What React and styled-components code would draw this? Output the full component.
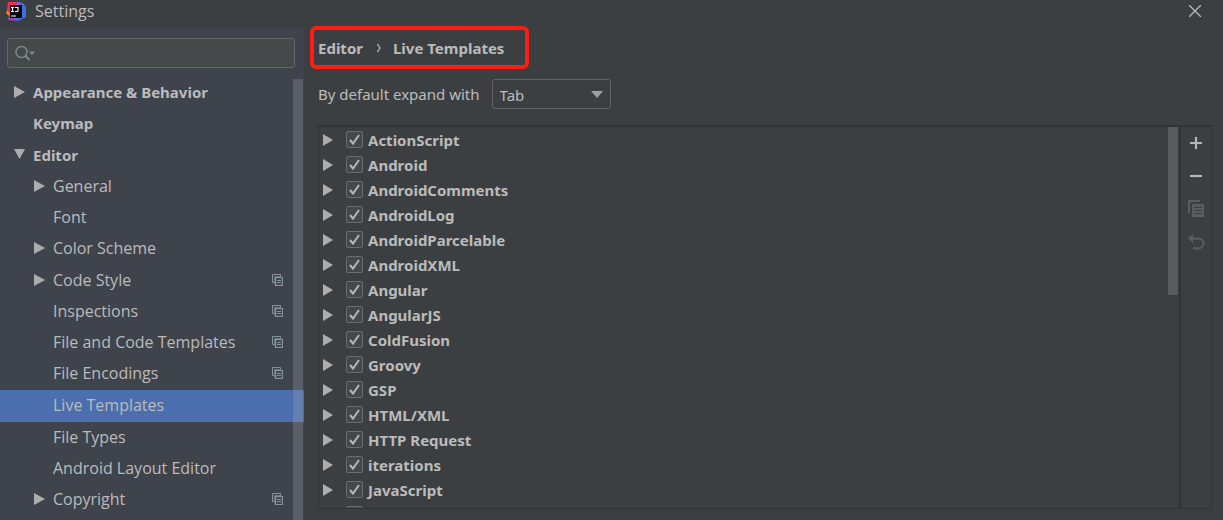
import React, { useState } from "react";
import styled, { createGlobalStyle, css } from "styled-components";

const GlobalStyle = createGlobalStyle`
  * { box-sizing: border-box; }
  body {
    margin: 0;
    background: #3c3f41;
    color: #bbbbbb;
    font: 15px/20px "Noto Sans", "Segoe UI", sans-serif;
  }
  button, input, select { font: inherit; color: inherit; }
`;

const Window = styled.div`
  display: flex;
  flex-direction: column;
  height: 100vh;
  overflow: hidden;
`;

const TitleBar = styled.header`
  flex: none;
  display: flex;
  align-items: center;
  gap: 9px;
  height: 28px;
  padding: 0 22px 6px 6px;
`;

const Title = styled.h1`
  flex: 1;
  margin: 0;
  font: 400 16px/20px "Open Sans", "Segoe UI", sans-serif;
`;

const IconButton = styled.button`
  display: grid;
  place-items: center;
  padding: 0;
  border: 0;
  background: none;
`;

const Body = styled.div`
  flex: 1;
  display: flex;
  min-height: 0;
`;

const Sidebar = styled.aside`
  flex: none;
  display: flex;
  flex-direction: column;
  width: 304px;
  background: #3f434c;
`;

const SearchBox = styled.label`
  flex: none;
  display: flex;
  align-items: center;
  height: 30px;
  margin: 10px 9px 0 7px;
  padding-left: 7px;
  border: 1px solid #646464;
  border-radius: 3px;
  background: #45494a;
`;

const SearchInput = styled.input`
  flex: 1;
  min-width: 0;
  border: 0;
  outline: 0;
  background: none;
`;

const TreeArea = styled.div`
  flex: 1;
  display: grid;
  grid-template: minmax(0, 1fr) / minmax(0, 1fr);
  min-height: 0;
  margin-top: 9px;
  overflow: hidden;
`;

const Tree = styled.ul`
  grid-area: 1 / 1;
  margin: 0;
  padding: 0;
  list-style: none;
`;

const TreeScrollbar = styled.div`
  grid-area: 1 / 1;
  justify-self: end;
  width: 10px;
  margin: 2px 1px 0 0;
  background: rgba(166, 170, 175, 0.28);
  pointer-events: none;
`;

const TreeRow = styled.li`
  display: flex;
  align-items: center;
  gap: 8px;
  height: 31px;
  padding: 0 21px 2px ${(p) => 14 + p.$level * 20}px;
  font: ${(p) => (p.$level === 0
    ? '700 15px/20px "Noto Sans"'
    : '400 16px/20px "Open Sans"')}, "Segoe UI", sans-serif;
  &:nth-child(4n + 2) { height: 32px; }
  ${(p) => p.$selected && css`
    height: 32px;
    background: #4b6eaf;
  `}
`;

const ArrowSlot = styled.span`
  flex: none;
  display: grid;
  width: 11px;
`;

const TreeLink = styled.a`
  flex: 1;
  color: inherit;
  text-decoration: none;
  white-space: nowrap;
`;

const Main = styled.main`
  flex: 1;
  display: flex;
  flex-direction: column;
  align-items: stretch;
  min-width: 0;
  padding: 2px 11px 11px 14px;
`;

const Breadcrumbs = styled.nav`
  flex: none;
  align-self: flex-start;
  display: flex;
  align-items: center;
  gap: 12px;
  height: 35px;
  margin-left: -4px;
  padding: 0 21px 0 4px;
  border-radius: 2px;
  outline: 4px solid #ff1c12;
  font-weight: 700;
`;

const Crumb = styled.a`
  color: inherit;
  text-decoration: none;
`;

const ExpandRow = styled.div`
  flex: none;
  display: flex;
  align-items: center;
  gap: 12px;
  margin-top: 14px;
`;

const SelectWrap = styled.div`
  display: grid;
  align-items: center;
  width: 119px;
`;

const Select = styled.select`
  grid-area: 1 / 1;
  height: 30px;
  padding: 2px 24px 0 7px;
  appearance: none;
  border: 1px solid #646464;
  border-radius: 3px;
  background: #3c3f41;
`;

const SelectArrow = styled.svg`
  grid-area: 1 / 1;
  justify-self: end;
  margin-right: 8px;
  pointer-events: none;
`;

const Panel = styled.section`
  flex: 1;
  display: flex;
  min-height: 0;
  margin-top: 16px;
  border: 1px solid #313335;
  border-top-width: 2px;
`;

const TemplateArea = styled.div`
  flex: 1;
  display: flex;
  min-width: 0;
  overflow: hidden;
`;

const TemplateList = styled.ul`
  flex: 1;
  margin: 0;
  padding: 0 0 0 4px;
  list-style: none;
`;

const TemplateRow = styled.li`
  display: flex;
  align-items: center;
  gap: 13px;
  height: 25px;
  font-weight: 700;
`;

const CheckLabel = styled.label`
  display: flex;
  align-items: center;
  gap: 5px;
`;

const CheckBox = styled.span`
  display: grid;
`;

const CheckInput = styled.input`
  grid-area: 1 / 1;
  width: 17px;
  height: 17px;
  margin: 0;
  appearance: none;
  border: 1px solid #6b6b6b;
  border-radius: 2px;
  background: #43494a;
  &:not(:checked) + svg { visibility: hidden; }
`;

const CheckMark = styled.svg`
  grid-area: 1 / 1;
  pointer-events: none;
`;

const ListScrollbar = styled.div`
  flex: none;
  width: 10px;
  height: 168px;
  margin-right: 1px;
  background: #595a5b;
`;

const Toolbar = styled.div`
  flex: none;
  width: 32px;
  border-left: 2px solid #313335;
`;

const ToolButton = styled(IconButton)`
  width: 30px;
  height: 33px;
  padding-bottom: 2px;
`;

const Logo = () => (
  <svg width="20" height="20" viewBox="0 0 20 20" aria-hidden="true">
    <path d="M2 7L0 12l4 4V8z" fill="#fc801d" />
    <path d="M2 1h8l3 4-8 9-4-5z" fill="#fe2857" />
    <path d="M3 14l-1 5 10 1 2-4z" fill="#a23ac2" />
    <path d="M13 1l4 1 3 4v10l-8 4-4-3 4-13z" fill="#3b6fe8" />
    <path d="M11 1l2 0 2 4h-6z" fill="#b24bc8" />
    <rect x="4" y="4" width="12" height="13" fill="#08060a" />
    <path d="M5 6.500h3M6.500 6v4.500M5 10.500h3M9 6.500h3v3q0 1-1 1h-2M5 15h5" fill="none" stroke="#fff" strokeWidth="1.200" />
  </svg>
);

const CloseIcon = () => (
  <svg width="12" height="12" viewBox="0 0 12 12" aria-hidden="true">
    <path d="M0 0l12 12M12 0L0 12" stroke="#bbbbbb" strokeWidth="1.300" />
  </svg>
);

const SearchIcon = () => (
  <svg width="21" height="17" viewBox="0 0 21 17" aria-hidden="true">
    <circle cx="6.500" cy="7" r="5.500" fill="none" stroke="#7e8b91" strokeWidth="1.400" />
    <path d="M10.500 11l4 4" stroke="#7e8b91" strokeWidth="1.800" />
    <path d="M14 6.500h6l-3 3.500z" fill="#7e8b91" />
  </svg>
);

const Arrow = ({ open }) => (
  <svg width="11" height="12" viewBox="0 0 11 12" aria-hidden="true">
    <path d={open ? "M0 0h11L5.500 10z" : "M0 0v12l11-6z"} fill="#adadad" />
  </svg>
);

const ProjectIcon = () => (
  <svg width="11" height="12" viewBox="0 0 11 12" aria-hidden="true">
    <path d="M2 8.500H.500V.500h8V2" fill="none" stroke="#87939a" />
    <path d="M2.500 10V2.500H9" fill="none" stroke="#6b757e" />
    <rect x="3.500" y="3.500" width="7" height="8" fill="none" stroke="#87939a" strokeWidth="1.300" />
    <path d="M5 6.500h4M5 8.500h4" stroke="#87939a" />
  </svg>
);

const PlusIcon = () => (
  <svg width="14" height="14" viewBox="0 0 14 14" aria-hidden="true">
    <path d="M7 1v12M1 7h12" stroke="#b4b6b7" strokeWidth="2.200" />
  </svg>
);

const MinusIcon = () => (
  <svg width="14" height="14" viewBox="0 0 14 14" aria-hidden="true">
    <path d="M1 7h12" stroke="#b4b6b7" strokeWidth="2.200" />
  </svg>
);

const DuplicateIcon = () => (
  <svg width="16" height="17" viewBox="0 0 16 17" aria-hidden="true">
    <path d="M0 0h12v2H2v11H0z" fill="#5a5c5d" />
    <path d="M4 4h12v13H4zM6 7v1h8V7zM6 10v1h8v-1zM6 13v1h8v-1z" fill="#5a5c5d" fillRule="evenodd" />
  </svg>
);

const UndoIcon = () => (
  <svg width="18" height="16" viewBox="0 0 18 16" aria-hidden="true">
    <path d="M5 4.500h6.500a4.800 4.800 0 0 1 0 9.800H6" fill="none" stroke="#5a5c5d" strokeWidth="2.200" />
    <path d="M6 0v9L1 4.500z" fill="#5a5c5d" />
  </svg>
);

const settings = [
  { name: "Appearance & Behavior", level: 0, arrow: "closed" },
  { name: "Keymap", level: 0 },
  { name: "Editor", level: 0, arrow: "open" },
  { name: "General", level: 1, arrow: "closed" },
  { name: "Font", level: 1 },
  { name: "Color Scheme", level: 1, arrow: "closed" },
  { name: "Code Style", level: 1, arrow: "closed", project: true },
  { name: "Inspections", level: 1, project: true },
  { name: "File and Code Templates", level: 1, project: true },
  { name: "File Encodings", level: 1, project: true },
  { name: "Live Templates", level: 1, selected: true },
  { name: "File Types", level: 1 },
  { name: "Android Layout Editor", level: 1 },
  { name: "Copyright", level: 1, arrow: "closed", project: true },
];

const templates = [
  "ActionScript", "Android", "AndroidComments", "AndroidLog", "AndroidParcelable",
  "AndroidXML", "Angular", "AngularJS", "ColdFusion", "Groovy", "GSP", "HTML/XML",
  "HTTP Request", "iterations", "JavaScript", "",
];

function TemplateItem({ name }) {
  const [checked, setChecked] = useState(true);
  return (
    <TemplateRow>
      <IconButton aria-label={`Expand ${name}`}>
        <svg width="10" height="12" viewBox="0 0 10 12" aria-hidden="true">
          <path d="M0 0v12l10-6z" fill="#adadad" />
        </svg>
      </IconButton>
      <CheckLabel>
        <CheckBox>
          <CheckInput type="checkbox" checked={checked} onChange={(e) => setChecked(e.target.checked)} />
          <CheckMark width="17" height="17" viewBox="0 0 17 17" aria-hidden="true">
            <path d="M4 9l3 3.500L13 4" fill="none" stroke="#b4b6b7" strokeWidth="2" />
          </CheckMark>
        </CheckBox>
        {name}
      </CheckLabel>
    </TemplateRow>
  );
}

export default function App() {
  return (
    <Window>
      <GlobalStyle />
      <TitleBar>
        <Logo />
        <Title>Settings</Title>
        <IconButton aria-label="Close"><CloseIcon /></IconButton>
      </TitleBar>
      <Body>
        <Sidebar>
          <SearchBox>
            <SearchIcon />
            <SearchInput type="text" aria-label="Search settings" />
          </SearchBox>
          <TreeArea>
            <Tree>
              {settings.map((item) => (
                <TreeRow key={item.name} $level={item.level} $selected={item.selected}>
                  <ArrowSlot>
                    {item.arrow && (
                      <IconButton aria-label={`Toggle ${item.name}`}>
                        <Arrow open={item.arrow === "open"} />
                      </IconButton>
                    )}
                  </ArrowSlot>
                  <TreeLink href="#">{item.name}</TreeLink>
                  {item.project && <ProjectIcon />}
                </TreeRow>
              ))}
            </Tree>
            <TreeScrollbar />
          </TreeArea>
        </Sidebar>
        <Main>
          <Breadcrumbs aria-label="Breadcrumb">
            <Crumb href="#">Editor</Crumb>
            <svg width="6" height="10" viewBox="0 0 6 10" aria-hidden="true">
              <path d="M2.500 1l2.500 4-2.500 4" fill="none" stroke="#bbbbbb" strokeWidth="1.300" />
            </svg>
            <Crumb href="#">Live Templates</Crumb>
          </Breadcrumbs>
          <ExpandRow>
            <label htmlFor="expand-key">By default expand with</label>
            <SelectWrap>
              <Select id="expand-key" defaultValue="Tab">
                <option>Tab</option>
                <option>Enter</option>
                <option>Space</option>
              </Select>
              <SelectArrow width="12" height="7" viewBox="0 0 12 7" aria-hidden="true">
                <path d="M0 0h12L6 7z" fill="#9da0a2" />
              </SelectArrow>
            </SelectWrap>
          </ExpandRow>
          <Panel>
            <TemplateArea>
              <TemplateList>
                {templates.map((name) => <TemplateItem key={name} name={name} />)}
              </TemplateList>
              <ListScrollbar />
            </TemplateArea>
            <Toolbar>
              <ToolButton aria-label="Add"><PlusIcon /></ToolButton>
              <ToolButton aria-label="Remove"><MinusIcon /></ToolButton>
              <ToolButton aria-label="Duplicate" disabled><DuplicateIcon /></ToolButton>
              <ToolButton aria-label="Revert" disabled><UndoIcon /></ToolButton>
            </Toolbar>
          </Panel>
        </Main>
      </Body>
    </Window>
  );
}
